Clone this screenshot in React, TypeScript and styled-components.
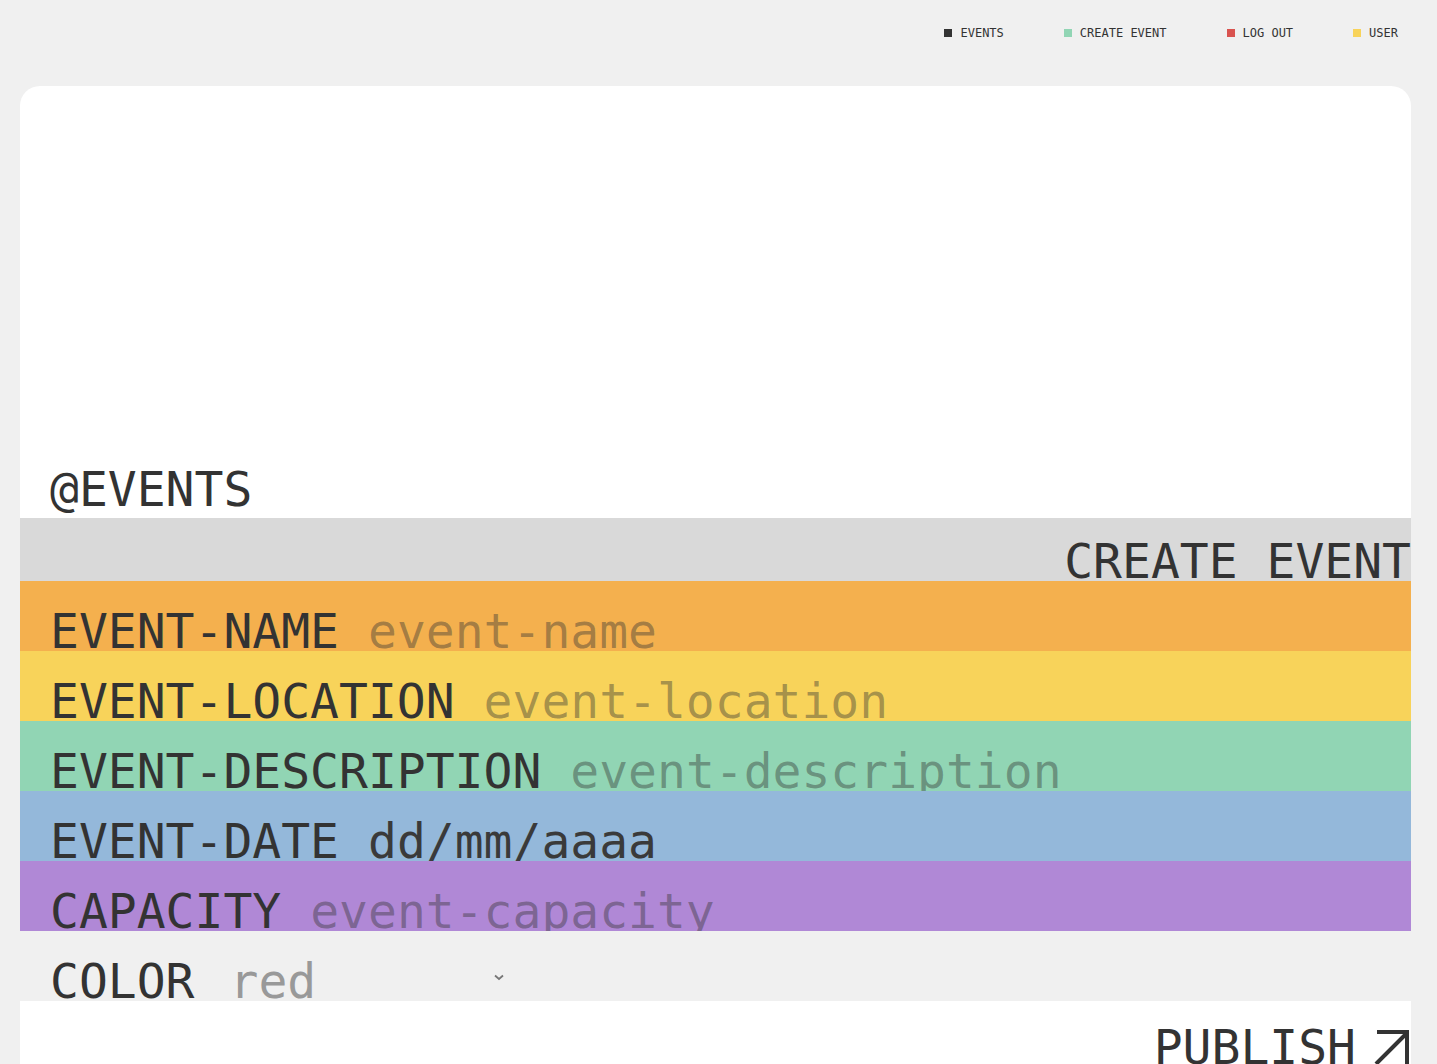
import React from "react";
import styled, { createGlobalStyle } from "styled-components";

const GlobalStyle = createGlobalStyle`
  html, body {
    margin: 0;
    padding: 0;
    background: #f0f0f0;
    font-family: "DejaVu Sans Mono", "Liberation Mono", monospace;
    color: #333333;
  }
  * { box-sizing: border-box; }
`;

const Page = styled.div`
  min-height: 1064px;
  display: flex;
  flex-direction: column;
`;

const Nav = styled.nav`
  display: flex;
  justify-content: flex-end;
  gap: 60px;
  padding: 26px 39px 0 0;
  height: 86px;
`;

const NavItem = styled.a<{ $dot: string }>`
  display: flex;
  align-items: center;
  gap: 8px;
  height: 14px;
  font-size: 12px;
  line-height: 14px;
  color: #333333;
  text-decoration: none;
  &::before {
    content: "";
    width: 8px;
    height: 8px;
    background: ${(p) => p.$dot};
  }
`;

const Card = styled.main`
  margin: 0 26px 0 20px;
  background: #ffffff;
  border-radius: 20px 20px 0 0;
  flex: 1;
  display: flex;
  flex-direction: column;
  overflow: hidden;
`;

const Title = styled.h1`
  margin: 0 0 5px 0;
  padding: 379px 0 0 30px;
  font-size: 48px;
  line-height: 48px;
  font-weight: normal;
  color: #333333;
`;

const Band = styled.div`
  height: 63px;
  background: #d9d9d9;
  display: flex;
  justify-content: flex-end;
  padding: 19px 0 0 0;
`;

const BandTitle = styled.h2`
  margin: 0;
  font-size: 48px;
  line-height: 48px;
  font-weight: normal;
  color: #333333;
`;

const Form = styled.form`
  display: flex;
  flex-direction: column;
`;

const Row = styled.label<{ $bg: string }>`
  height: 70px;
  background: ${(p) => p.$bg};
  display: flex;
  align-items: flex-start;
  padding: 26px 0 0 30px;
  gap: 29px;
`;

const Label = styled.span`
  font-size: 48px;
  line-height: 48px;
  color: #333333;
  white-space: nowrap;
`;

const Input = styled.input<{ $ph: string }>`
  flex: 1;
  min-width: 0;
  border: 0;
  outline: none;
  background: transparent;
  padding: 0;
  margin: 0;
  font-family: inherit;
  font-size: 48px;
  line-height: 48px;
  height: 48px;
  color: #333333;
  &::placeholder {
    color: ${(p) => p.$ph};
    opacity: 1;
  }
`;

const SelectWrap = styled.div`
  position: relative;
  width: 280px;
  height: 48px;
`;

const Select = styled.select`
  appearance: none;
  -webkit-appearance: none;
  width: 100%;
  height: 48px;
  border: 0;
  outline: none;
  background: transparent;
  padding: 0 0 0 6px;
  margin: 0;
  font-family: inherit;
  font-size: 48px;
  line-height: 48px;
  color: #999999;
`;

const Chevron = styled.svg`
  position: absolute;
  right: 0;
  top: 17px;
  pointer-events: none;
`;

const Footer = styled.div`
  display: flex;
  justify-content: flex-end;
  padding-top: 22px;
  height: 63px;
`;

const Publish = styled.button`
  display: flex;
  align-items: flex-start;
  gap: 18px;
  border: 0;
  background: transparent;
  padding: 0;
  margin: 0;
  cursor: pointer;
  font-family: inherit;
  font-size: 48px;
  line-height: 48px;
  color: #333333;
`;

const Arrow = styled.svg`
  margin-top: 5px;
  flex-shrink: 0;
`;

const rows = [
  { label: "EVENT-NAME", ph: "event-name", bg: "#f4b04e", phc: "rgba(51,51,51,0.42)" },
  { label: "EVENT-LOCATION", ph: "event-location", bg: "#f8d35a", phc: "rgba(51,51,51,0.42)" },
  { label: "EVENT-DESCRIPTION", ph: "event-description", bg: "#91d5b4", phc: "rgba(51,51,51,0.42)" },
  { label: "EVENT-DATE", ph: "dd/mm/aaaa", bg: "#94b8da", phc: "#3a3a3a" },
  { label: "CAPACITY", ph: "event-capacity", bg: "#b088d6", phc: "rgba(51,51,51,0.42)" },
];

export default function App() {
  return (
    <Page>
      <GlobalStyle />
      <Nav>
        <NavItem href="#" $dot="#333333">EVENTS</NavItem>
        <NavItem href="#" $dot="#91d5b4">CREATE EVENT</NavItem>
        <NavItem href="#" $dot="#d9534f">LOG OUT</NavItem>
        <NavItem href="#" $dot="#f8d35a">USER</NavItem>
      </Nav>
      <Card>
        <Title>@EVENTS</Title>
        <Band>
          <BandTitle>CREATE EVENT</BandTitle>
        </Band>
        <Form onSubmit={(e) => e.preventDefault()}>
          {rows.map((r) => (
            <Row key={r.label} $bg={r.bg}>
              <Label>{r.label}</Label>
              <Input placeholder={r.ph} $ph={r.phc} />
            </Row>
          ))}
          <Row $bg="#f0f0f0">
            <Label>COLOR</Label>
            <SelectWrap>
              <Select defaultValue="red">
                <option value="red">red</option>
                <option value="orange">orange</option>
                <option value="yellow">yellow</option>
                <option value="green">green</option>
                <option value="blue">blue</option>
                <option value="purple">purple</option>
              </Select>
              <Chevron width="10" height="7" viewBox="0 0 10 7">
                <path d="M1 1.5 L5 5 L9 1.5" fill="none" stroke="#777" strokeWidth="1.8" />
              </Chevron>
            </SelectWrap>
          </Row>
          <Footer>
            <Publish type="submit">
              PUBLISH
              <Arrow width="37" height="40" viewBox="0 0 37 40">
                <path d="M2 36 L33 5" stroke="#333" strokeWidth="4" fill="none" />
                <path d="M3 4 L33 4 L33 40" stroke="#333" strokeWidth="4" fill="none" />
              </Arrow>
            </Publish>
          </Footer>
        </Form>
      </Card>
    </Page>
  );
}
